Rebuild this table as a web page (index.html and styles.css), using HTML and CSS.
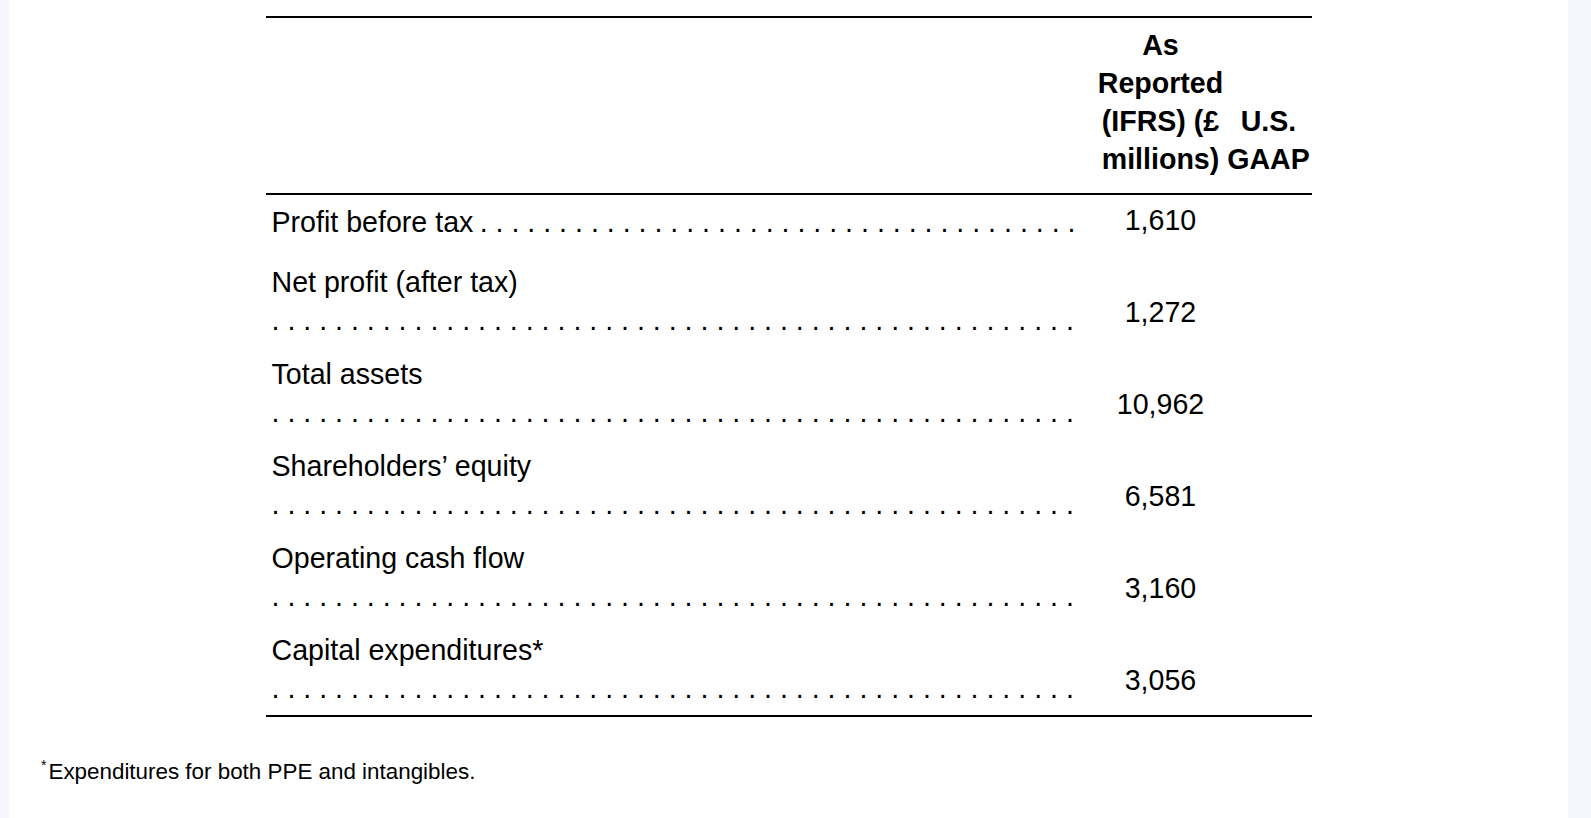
FILE: index.html
```html
<!DOCTYPE html>
<html lang="en">
<head>
<meta charset="utf-8">
<title>IFRS vs U.S. GAAP</title>
<link rel="stylesheet" href="styles.css">
</head>
<body>
<main class="sheet">
  <div class="fin-table">
    <div class="th th-label"></div>
    <div class="th th-col">As Reported (IFRS) (£ millions)</div>
    <div class="th th-col">U.S. GAAP</div>

    <div class="td td-label inline">
      <span class="label">Profit before tax</span>
      <span class="leader"><span>. . . . . . . . . . . . . . . . . . . . . . . . . . . . . . . . . . . . . .</span></span>
    </div>
    <div class="td td-num">1,610</div>
    <div class="td td-num"></div>

    <div class="td td-label">
      <span class="label">Net profit (after tax)</span>
      <span class="leader"><span>. . . . . . . . . . . . . . . . . . . . . . . . . . . . . . . . . . . . . . . . . . . . . . . . . . .</span></span>
    </div>
    <div class="td td-num">1,272</div>
    <div class="td td-num"></div>

    <div class="td td-label">
      <span class="label">Total assets</span>
      <span class="leader"><span>. . . . . . . . . . . . . . . . . . . . . . . . . . . . . . . . . . . . . . . . . . . . . . . . . . .</span></span>
    </div>
    <div class="td td-num">10,962</div>
    <div class="td td-num"></div>

    <div class="td td-label">
      <span class="label">Shareholders’ equity</span>
      <span class="leader"><span>. . . . . . . . . . . . . . . . . . . . . . . . . . . . . . . . . . . . . . . . . . . . . . . . . . .</span></span>
    </div>
    <div class="td td-num">6,581</div>
    <div class="td td-num"></div>

    <div class="td td-label">
      <span class="label">Operating cash flow</span>
      <span class="leader"><span>. . . . . . . . . . . . . . . . . . . . . . . . . . . . . . . . . . . . . . . . . . . . . . . . . . .</span></span>
    </div>
    <div class="td td-num">3,160</div>
    <div class="td td-num"></div>

    <div class="td td-label">
      <span class="label">Capital expenditures*</span>
      <span class="leader"><span>. . . . . . . . . . . . . . . . . . . . . . . . . . . . . . . . . . . . . . . . . . . . . . . . . . .</span></span>
    </div>
    <div class="td td-num">3,056</div>
    <div class="td td-num"></div>
  </div>

  <p class="note"><sup>*</sup>Expenditures for both PPE and intangibles.</p>
</main>
</body>
</html>
```

FILE: styles.css
```css
html, body {
  margin: 0;
  padding: 0;
}

body {
  background: #f5f7fc;
  font-family: "Liberation Sans", Arial, Helvetica, sans-serif;
  color: #000;
}

.sheet {
  box-sizing: border-box;
  margin-left: 9px;
  width: 1559px;
  height: 818px;
  background: #fff;
  padding-top: 16px;
  overflow: hidden;
}

.fin-table {
  width: 1046px;
  margin: 0 auto;
  display: grid;
  grid-template-columns: 830px 130px 86px;
  border-top: 2px solid #000;
  border-bottom: 2px solid #000;
  font-size: 28.6px;
  line-height: 38px;
}

.th {
  box-sizing: border-box;
  padding: 8px 0 15px;
  border-bottom: 2px solid #000;
  font-weight: bold;
  text-align: center;
  display: flex;
  flex-direction: column;
  justify-content: flex-end;
}

.td {
  box-sizing: border-box;
}

.td-label {
  padding: 8px 20px 8px 6px;
  display: flex;
  flex-direction: column;
  min-width: 0;
}

.td-label.inline {
  flex-direction: row;
}

.label {
  white-space: nowrap;
}

.leader {
  display: flex;
  justify-content: flex-start;
  overflow: hidden;
  white-space: nowrap;
  min-width: 0;
}

.td-label.inline .leader {
  flex: 1;
  justify-content: flex-end;
  margin-left: 1px;
}

.td-num {
  padding: 6px 0 16px;
  display: flex;
  align-items: flex-end;
  justify-content: center;
}

.note {
  margin: 42px 0 0 32px;
  font-size: 22.4px;
  line-height: 26px;
}

.note sup {
  font-size: 14px;
  line-height: 0;
  vertical-align: 9px;
  margin-right: 2px;
}
```
